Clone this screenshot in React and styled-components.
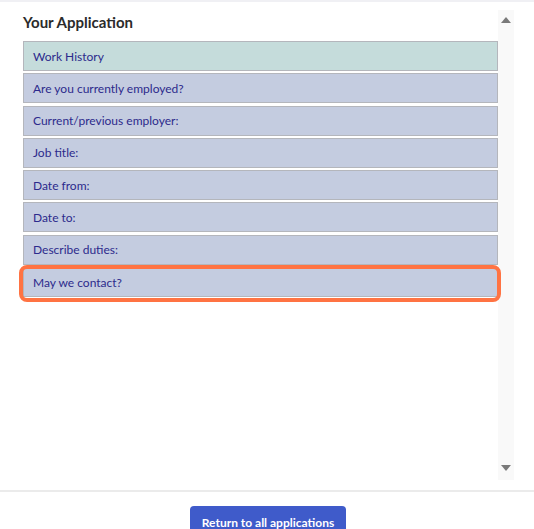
import React from 'react';
import styled, { createGlobalStyle } from 'styled-components';

const GlobalStyle = createGlobalStyle`
  html, body {
    margin: 0;
    padding: 0;
    background: #ffffff;
  }
  body {
    font-family: Lato, "Open Sans", Arial, sans-serif;
    overflow: hidden;
  }
`;

const fields = [
  { label: 'Work History', section: true },
  { label: 'Are you currently employed?' },
  { label: 'Current/previous employer:' },
  { label: 'Job title:' },
  { label: 'Date from:' },
  { label: 'Date to:' },
  { label: 'Describe duties:' },
  { label: 'May we contact?', highlighted: true },
];

const App = () => (
  <>
    <GlobalStyle />
    <Page>
      <Panel>
        <Content>
          <Title>Your Application</Title>
          <List>
            {fields.map(field => (
              <Row key={field.label} section={field.section}>
                {field.label}
                {field.highlighted && <Highlight />}
              </Row>
            ))}
          </List>
        </Content>
        <Scrollbar>
          <ArrowUp />
          <ArrowDown />
        </Scrollbar>
      </Panel>
      <Footer>
        <ReturnButton>Return to all applications</ReturnButton>
      </Footer>
    </Page>
  </>
);

const Page = styled.div`
  width: 534px;
  height: 529px;
  display: flex;
  flex-direction: column;
  overflow: hidden;
`;

const Panel = styled.div`
  flex-shrink: 0;
  height: 490px;
  box-sizing: border-box;
  border-top: 2px solid #f0f0f4;
  display: flex;
  padding: 0 20px 0 23px;
`;

const Content = styled.div`
  flex: 1;
  padding-top: 11px;
`;

const Title = styled.h2`
  margin: 0 0 10px;
  font-size: 15px;
  line-height: 18px;
  font-weight: 700;
  color: #2b2b2b;
`;

const List = styled.div`
  display: flex;
  flex-direction: column;
  gap: 2.3px;
`;

const Row = styled.div`
  position: relative;
  height: 30px;
  box-sizing: border-box;
  border: 1px solid #b4b6bc;
  padding-left: 9px;
  display: flex;
  align-items: center;
  font-size: 12px;
  color: #2c2a8c;
  background: ${({ section }) => (section ? '#c5dcdb' : '#c4cce0')};
`;

const Highlight = styled.div`
  position: absolute;
  top: -3px;
  left: -5px;
  right: -4px;
  bottom: -6px;
  border: 4px solid #ff7343;
  border-radius: 8px;
  pointer-events: none;
`;

const Scrollbar = styled.div`
  width: 16px;
  margin-top: 8px;
  height: 470px;
  background: #f9f9f9;
  display: flex;
  flex-direction: column;
  justify-content: space-between;
  align-items: center;
  padding: 7px 0 9px;
  box-sizing: border-box;
`;

const ArrowUp = styled.div`
  width: 0;
  height: 0;
  border-left: 5px solid transparent;
  border-right: 5px solid transparent;
  border-bottom: 6px solid #7a7a7a;
`;

const ArrowDown = styled.div`
  width: 0;
  height: 0;
  border-left: 5px solid transparent;
  border-right: 5px solid transparent;
  border-top: 6px solid #7a7a7a;
`;

const Footer = styled.div`
  flex-shrink: 0;
  border-top: 2px solid #ebebeb;
  display: flex;
  justify-content: center;
  padding: 14px 0 0 2px;
`;

const ReturnButton = styled.button`
  width: 156px;
  height: 32px;
  border: none;
  border-radius: 4px;
  background: #3f5bca;
  color: #ffffff;
  font-family: Lato, Arial, sans-serif;
  font-size: 12px;
  font-weight: 700;
  padding: 0;
  cursor: pointer;
`;

export default App;
